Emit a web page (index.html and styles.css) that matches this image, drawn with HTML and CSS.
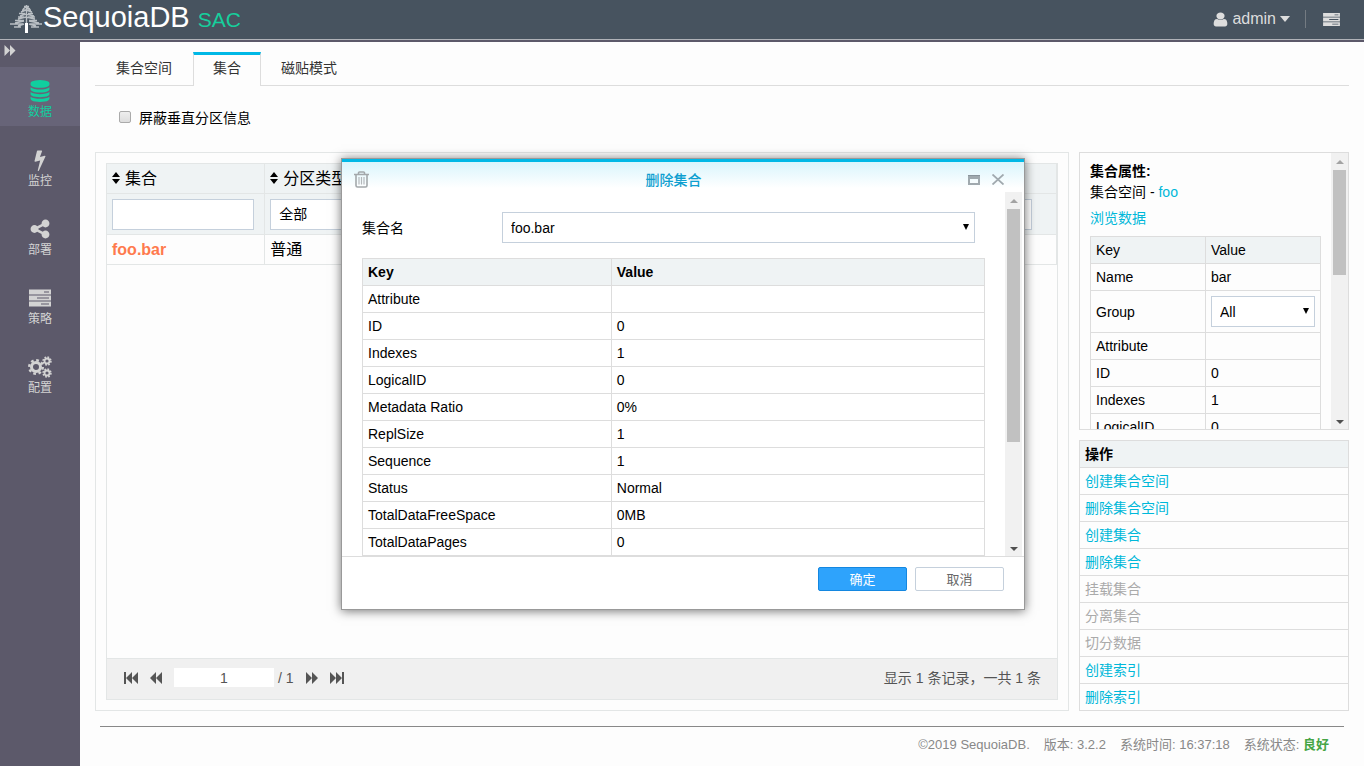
FILE: index.html
```
<!DOCTYPE html>
<html lang="zh-CN">
<head>
<meta charset="utf-8">
<title>SequoiaDB SAC</title>
<link rel="stylesheet" href="styles.css">
</head>
<body>
<svg class="defs" aria-hidden="true">
  <symbol id="i-tasks" viewBox="0 0 22 17"><path fill="currentColor" fill-rule="evenodd" d="M0 0h22v5H0zM15 2v1h5V2zM0 6h22v5H0zM8 8v1h12V8zM0 12h22v5H0zM12 14v1h8v-1z"/></symbol>
  <symbol id="i-fwd" viewBox="0 0 12 12"><path fill="currentColor" d="M0 0l6 6V0l6 6-6 6V6l-6 6z"/></symbol>
  <symbol id="i-end" viewBox="0 0 15 12"><path fill="currentColor" d="M0 0l6 6V0l6 6V0h2v12h-2V6l-6 6V6l-6 6z"/></symbol>
  <symbol id="i-sort" viewBox="0 0 8 12"><path fill="currentColor" d="M4 0l4 5H0zM4 12l4-5H0z"/></symbol>
  <symbol id="i-down" viewBox="0 0 8 8"><path fill="currentColor" d="M1 1h6L4 7z"/></symbol>
</svg>

<header class="topbar">
  <svg class="tree" viewBox="0 0 32 30" aria-hidden="true"><g stroke="#b9bfc4" fill="none"><path stroke-width="3" stroke="#fff" d="M16.500 19v10"/><path stroke-width="1.400" d="M16.500 1v18M14 2.500h5M12 6h9M13 5l3-2 4 2M9 9.500h6M18 9.500h5M11 8l5-2 6 2M8 13h6M18 13h7M10 12l6-2 8 2M5 16.500h9M19 16.500h8M8 15l8-2 9 2M0 20h13M20 20h12M5 19l9-2M19 17l10 2M4 23h7M21 23h8M8 22l6-2M19 20l7 2"/></g></svg>
  <span class="brand">SequoiaDB</span>
  <span class="sac">SAC</span>
  <div class="account">
    <button class="user" type="button">
      <svg width="15" height="15" viewBox="192 64 1408 1664" preserveAspectRatio="none" aria-hidden="true"><path fill="currentColor" d="M1536 1399q0 109-62.5 187t-150.5 78h-854q-88 0-150.5-78t-62.5-187q0-85 8.500-160.500t31.500-152 58.500-131 94-89 134.500-34.500q131 128 313 128t313-128q76 0 134.500 34.500t94 89 58.500 131 31.500 152 8.500 160.500zm-256-887q0 159-112.500 271.500t-271.500 112.500-271.500-112.500-112.500-271.500 112.500-271.500 271.500-112.500 271.500 112.500 112.500 271.500z"/></svg>
      <span>admin</span>
      <svg width="10" height="6" viewBox="0 0 10 6" aria-hidden="true"><path fill="currentColor" d="M0 0h10L5 6z"/></svg>
    </button>
    <button class="tasks" type="button" aria-label="Tasks"><svg width="17" height="13" aria-hidden="true"><use href="#i-tasks"/></svg></button>
  </div>
</header>

<div class="shell">
  <nav class="side">
    <button class="expand" type="button" aria-label="展开"><svg width="12" height="11"><use href="#i-fwd"/></svg></button>
    <a class="nav active" href="#"><svg width="22" height="22" viewBox="0 0 1792 1792"><path fill="currentColor" d="M896 768q237 0 443-43t325-127v170q0 69-103 128t-280 93.500-385 34.500-385-34.500-280-93.500-103-128v-170q119 84 325 127t443 43zm0 768q237 0 443-43t325-127v170q0 69-103 128t-280 93.500-385 34.500-385-34.500-280-93.500-103-128v-170q119 84 325 127t443 43zm0-384q237 0 443-43t325-127v170q0 69-103 128t-280 93.500-385 34.500-385-34.500-280-93.500-103-128v-170q119 84 325 127t443 43zm0-1152q208 0 385 34.500t280 93.500 103 128v128q0 69-103 128t-280 93.500-385 34.500-385-34.500-280-93.500-103-128v-128q0-69 103-128t280-93.500 385-34.500z"/></svg>数据</a>
    <a class="nav" href="#"><svg width="22" height="22" viewBox="0 0 1792 1792"><path fill="currentColor" d="M1333 566q18 20 7 44l-540 1157q-13 25-42 25-4 0-14-2-17-5-25.500-19t-4.500-30l197-808-406 101q-4 1-12 1-18 0-31-11-18-15-13-39l201-825q4-14 16-23t28-9h328q19 0 32 12.500t13 29.500q0 8-5 18l-171 463 396-98q8-2 12-2 19 0 34 15z"/></svg>监控</a>
    <a class="nav" href="#"><svg width="22" height="22" viewBox="0 0 1792 1792"><path fill="currentColor" d="M1344 1024q133 0 226.500 93.500t93.500 226.500-93.500 226.500-226.500 93.500-226.500-93.500-93.500-226.500q0-12 2-34l-360-180q-92 86-218 86-133 0-226.500-93.500t-93.500-226.500 93.500-226.500 226.500-93.500q126 0 218 86l360-180q-2-22-2-34 0-133 93.500-226.500t226.500-93.500 226.500 93.500 93.500 226.500-93.500 226.500-226.500 93.500q-126 0-218-86l-360 180q2 22 2 34t-2 34l360 180q92-86 218-86z"/></svg>部署</a>
    <a class="nav" href="#"><svg width="22" height="22"><use href="#i-tasks"/></svg>策略</a>
    <a class="nav" href="#"><svg width="24" height="22" viewBox="0 0 24 22"><g fill="none" stroke="currentColor"><circle cx="8" cy="11" r="4.500" stroke-width="3"/><circle cx="8" cy="11" r="6.800" stroke-width="2.400" stroke-dasharray="2.700 2.640"/><circle cx="19" cy="5" r="2.500" stroke-width="1.800"/><circle cx="19" cy="5" r="3.900" stroke-width="1.600" stroke-dasharray="1.700 1.363"/><circle cx="19" cy="17" r="2.500" stroke-width="1.800"/><circle cx="19" cy="17" r="3.900" stroke-width="1.600" stroke-dasharray="1.700 1.363"/></g></svg>配置</a>
  </nav>

  <main class="main">
    <div class="tabs">
      <a class="tab first" href="#">集合空间</a>
      <a class="tab current" href="#">集合</a>
      <a class="tab" href="#">磁贴模式</a>
    </div>
    <div class="option"><input type="checkbox" id="hide"><label for="hide">屏蔽垂直分区信息</label></div>

    <div class="columns">
      <section class="panel">
        <div class="grid">
          <table class="list">
            <thead>
              <tr><th><svg width="8" height="12"><use href="#i-sort"/></svg>集合</th><th><svg width="8" height="12"><use href="#i-sort"/></svg>分区类型</th><th></th><th></th><th></th><th></th></tr>
              <tr class="filters">
                <td><input type="text" aria-label="集合"></td>
                <td><select aria-label="分区类型"><option>全部</option></select></td>
                <td></td><td></td><td></td>
                <td class="last"><input type="text"></td>
              </tr>
            </thead>
            <tbody><tr><td><a class="name" href="#">foo.bar</a></td><td>普通</td><td></td><td></td><td></td><td></td></tr></tbody>
          </table>
          <div class="pager">
            <button type="button" class="flip" aria-label="首页"><svg width="15" height="12"><use href="#i-end"/></svg></button>
            <button type="button" class="flip" aria-label="上一页"><svg width="12" height="12"><use href="#i-fwd"/></svg></button>
            <input type="text" value="1" aria-label="页码">
            <span class="pages">/ 1</span>
            <button type="button" aria-label="下一页"><svg width="12" height="12"><use href="#i-fwd"/></svg></button>
            <button type="button" aria-label="末页"><svg width="15" height="12"><use href="#i-end"/></svg></button>
            <span class="total">显示 1 条记录，一共 1 条</span>
          </div>
        </div>
      </section>

      <aside class="aside">
        <section class="props">
          <div class="props-body">
            <h2>集合属性:</h2>
            <p>集合空间 - <a href="#">foo</a></p>
            <p class="browse"><a href="#">浏览数据</a></p>
            <table class="kv half">
              <thead><tr><td>Key</td><td>Value</td></tr></thead>
              <tbody>
                <tr><td>Name</td><td>bar</td></tr>
                <tr class="tall"><td>Group</td><td><span class="pick"><select aria-label="Group"><option>All</option></select><svg width="8" height="8"><use href="#i-down"/></svg></span></td></tr>
                <tr><td>Attribute</td><td></td></tr>
                <tr><td>ID</td><td>0</td></tr>
                <tr><td>Indexes</td><td>1</td></tr>
                <tr><td>LogicalID</td><td>0</td></tr>
              </tbody>
            </table>
          </div>
          <div class="bar" aria-hidden="true"><i class="up"></i><i class="thumb short"></i><i class="down"></i></div>
        </section>
        <section class="ops">
          <h2>操作</h2>
          <ul>
            <li><a href="#">创建集合空间</a></li>
            <li><a href="#">删除集合空间</a></li>
            <li><a href="#">创建集合</a></li>
            <li><a href="#">删除集合</a></li>
            <li class="off">挂载集合</li>
            <li class="off">分离集合</li>
            <li class="off">切分数据</li>
            <li><a href="#">创建索引</a></li>
            <li><a href="#">删除索引</a></li>
          </ul>
        </section>
      </aside>
    </div>

    <footer class="foot">
      <span>©2019 SequoiaDB.</span><span>版本: 3.2.2</span><span>系统时间: 16:37:18</span><span>系统状态: <b>良好</b></span>
    </footer>
  </main>
</div>

<div class="dialog" role="dialog" aria-labelledby="dlg-title">
  <div class="dlg-head">
    <svg width="15" height="17" viewBox="0 0 15 17" aria-hidden="true"><path fill="none" stroke="#a3a8ab" stroke-width="1.600" d="M0 3.500h15M4.500 3V1.800Q4.500 1 5.500 1h4q1 0 1 .8V3M2 4v10.500q0 1.500 1.500 1.500h8q1.500 0 1.500-1.500V4"/><path stroke="#b4b8bb" stroke-width="1.200" d="M5 6v7.500M7.500 6v7.500M10 6v7.500"/></svg>
    <h1 id="dlg-title">删除集合</h1>
    <button type="button" aria-label="最大化"><svg width="12" height="10" viewBox="0 0 12 10"><path fill="#a0a9ae" fill-rule="evenodd" d="M0 0h12v10H0zM2 4v4h8V4z"/><path fill="#89949b" d="M0 0h12v1H0z"/></svg></button>
    <button type="button" aria-label="关闭"><svg width="12" height="11" viewBox="0 0 12 11"><path stroke="#a0a9ae" stroke-width="1.800" d="M.5 .5l11 10M11.500 .5l-11 10"/></svg></button>
  </div>
  <div class="dlg-main">
    <div class="dlg-body">
      <div class="field">
        <label for="cl">集合名</label>
        <span class="pick"><select id="cl"><option>foo.bar</option></select><svg width="8" height="8"><use href="#i-down"/></svg></span>
      </div>
      <table class="kv wide">
        <thead><tr><th>Key</th><th>Value</th></tr></thead>
        <tbody>
          <tr><td>Attribute</td><td></td></tr>
          <tr><td>ID</td><td>0</td></tr>
          <tr><td>Indexes</td><td>1</td></tr>
          <tr><td>LogicalID</td><td>0</td></tr>
          <tr><td>Metadata Ratio</td><td>0%</td></tr>
          <tr><td>ReplSize</td><td>1</td></tr>
          <tr><td>Sequence</td><td>1</td></tr>
          <tr><td>Status</td><td>Normal</td></tr>
          <tr><td>TotalDataFreeSpace</td><td>0MB</td></tr>
          <tr><td>TotalDataPages</td><td>0</td></tr>
        </tbody>
      </table>
    </div>
    <div class="bar" aria-hidden="true"><i class="up"></i><i class="thumb"></i><i class="down"></i></div>
  </div>
  <div class="dlg-foot">
    <button class="btn primary" type="button">确定</button>
    <button class="btn" type="button">取消</button>
  </div>
</div>
</body>
</html>
```
FILE: styles.css
```
* { box-sizing: border-box; }
body {
  margin: 0;
  height: 100vh;
  display: flex;
  flex-direction: column;
  overflow: hidden;
  background: #fdfdfd;
  color: #000;
  font: 14px/20px "Liberation Sans", "Noto Sans CJK SC", sans-serif;
}
a { color: #00b8d9; text-decoration: none; }
h1, h2, p, ul { margin: 0; padding: 0; font-size: 14px; }
ul { list-style: none; }
svg { display: block; flex: none; }
button, input, select { font: inherit; color: inherit; }
button { padding: 0; border: 0; background: none; display: flex; align-items: center; }
input[type="text"], select {
  display: block;
  width: 100%;
  height: 31px;
  padding: 0 8px;
  border: 1px solid #c5d0dc;
  border-radius: 0;
  background: #fff;
  appearance: none;
}
.defs { position: absolute; width: 0; height: 0; }

.topbar {
  height: 42px;
  flex: none;
  display: flex;
  align-items: center;
  padding: 0 24px 4px 10px;
  background: #47535f;
  border-bottom: 2px solid #5c596a;
  box-shadow: inset 0 -1px #b0b2b8;
  color: #ddd;
}
.tree { width: 32px; height: 30px; margin-top: 2px; }
.brand { margin: 0 0 2px 1px; font-size: 29px; color: #fff; }
.sac { margin: 4px 0 0 8px; font-size: 21px; color: #16cf9c; }
.account { margin: 2px 0 0 auto; display: flex; align-items: center; }
.user { gap: 4px; font-size: 16px; }
.tasks { margin-left: 15px; height: 18px; padding-left: 17px; border-left: 1px solid #747b82; }

.shell { flex: 1; display: flex; min-height: 0; }
.side { width: 80px; flex: none; background: #5c596a; color: #d3d3d3; font-size: 12px; }
.expand { height: 25px; padding: 0 0 8px 4px; }
.nav {
  height: 59px;
  margin-bottom: 10px;
  padding-top: 13px;
  display: flex;
  flex-direction: column;
  align-items: center;
  line-height: 20px;
  color: #d3d3d3;
}
.nav.active { background: #676478; color: #10cf9f; }

.main { flex: 1; min-width: 0; display: flex; flex-direction: column; padding: 10px 15px 0; }
.tabs { display: flex; height: 34px; flex: none; border-bottom: 1px solid #ddd; }
.tab { height: 34px; padding: 3px 19px 0; line-height: 26px; border: solid transparent; border-width: 0 1px; color: #333; text-align: center; }
.tab.first { min-width: 98px; }
.tab.current { padding-top: 0; border-color: #ddd; border-top: 3px solid #00b8e6; background: #fdfdfd; }
.option { height: 66px; flex: none; display: flex; align-items: center; gap: 8px; padding: 0 0 2px 24px; }
.option input {
  appearance: none;
  width: 12px;
  height: 12px;
  margin: 0 0 2px;
  border: 1px solid #aaa;
  border-radius: 2px;
  background: linear-gradient(#eee, #ddd);
}

.columns { flex: 1; min-height: 0; display: flex; gap: 10px; }
.panel { flex: 1; min-width: 0; padding: 10px; border: 1px solid #e3e6e6; display: flex; }
.grid { flex: 1; display: flex; flex-direction: column; border: 1px solid #e3e6e6; }
.list { width: 100%; table-layout: fixed; border-collapse: separate; border-spacing: 0; font-size: 16px; }
.list th, .list td { height: 30px; padding: 0 5px; border: solid #e3e6e6; border-width: 0 1px 1px 0; text-align: left; font-weight: normal; }
.list thead { background: #eff3f4; }
.list th svg { display: inline-block; margin-right: 5px; }
.list .filters td { height: 41px; padding: 0 10px 0 5px; font-size: 14px; }
.list .filters .last { padding-right: 24px; }
.list .name { color: #ff7a4d; font-weight: bold; }
.pager { margin-top: auto; height: 41px; padding: 0 16px 3px; display: flex; align-items: center; background: #f0f0f0; border-top: 1px solid #e3e6e6; color: #555; }
.pager button { margin-right: 12px; }
.pager .flip { transform: scaleX(-1); }
.pager input[type="text"] { width: 100px; height: 19px; border: 0; text-align: center; }
.pager .pages { margin: 0 12px 0 4px; }
.total { margin-left: auto; }

.aside { width: 270px; flex: none; display: flex; flex-direction: column; gap: 10px; }
.props { flex: 1; min-height: 0; display: flex; border: 1px solid #ddd; }
.props-body { flex: 1; overflow: hidden; padding: 8px 10px 0; }
.props-body h2, .props-body p { line-height: 21px; }
.props-body .browse { margin: 5px 0 7px; }
.ops { border: 1px solid #ddd; border-bottom: 0; }
.ops h2, .ops li { height: 27px; padding: 0 5px; line-height: 26px; border-bottom: 1px solid #ddd; }
.ops h2 { background: #eff3f4; }
.ops .off { color: #aaa; }

.kv { width: 100%; table-layout: fixed; border-collapse: collapse; }
.kv th, .kv td { height: 27px; padding: 0 5px; border: 1px solid #ddd; text-align: left; }
.kv thead { background: #eff3f4; }
.kv .tall td { height: 42px; }
.wide th:first-child { width: 40%; }
.pick { position: relative; display: block; }
.pick svg { position: absolute; right: 5px; top: 11px; }

.bar { width: 17px; flex: none; display: flex; flex-direction: column; align-items: center; background: #f1f1f1; margin-right: 2px; }
.props .bar { margin: 0; }
.bar .up, .bar .down { border: 4px solid transparent; }
.bar .up { margin: 3px 0 6px; border-bottom-color: #a3a3a3; }
.bar .down { margin: auto 0 1px; border-top-color: #505050; }
.thumb { width: 13px; height: 64%; background: #c1c1c1; }
.thumb.short { height: 38%; }

.foot {
  flex: none;
  height: 40px;
  margin: 15px 5px 0;
  padding: 8px 15px 0;
  display: flex;
  justify-content: flex-end;
  gap: 14px;
  border-top: 1px solid #888;
  color: #888;
  font-size: 13px;
}
.foot b { color: #46a546; font-size: 13px; }

.dialog {
  position: absolute;
  left: 50%;
  top: 158px;
  width: 684px;
  margin-left: -341px;
  border: 1px solid #999;
  background: #fff;
  box-shadow: 0 1px 10px rgba(0, 0, 0, .55);
}
.dlg-head {
  height: 33px;
  padding: 5px 20px 0 12px;
  display: flex;
  align-items: center;
  gap: 12px;
  border-top: 3px solid #00b8e6;
  background: linear-gradient(#d9f5fc, #fff 26px);
}
.dlg-head h1 { flex: 1; padding-left: 10px; text-align: center; color: #0e9fd0; font-weight: 500; }
.dlg-main { display: flex; height: 365px; border-bottom: 1px solid #ddd; }
.dlg-body { flex: 1; overflow: hidden; padding: 20px 20px 0; }
.field { display: flex; align-items: center; margin-bottom: 15px; }
.field label { width: 140px; }
.field .pick { flex: 1; margin-right: 10px; }
.dlg-foot { display: flex; justify-content: flex-end; gap: 8px; padding: 10px 20px 18px; }
.btn { width: 89px; height: 24px; padding-top: 1px; justify-content: center; border: 1px solid #c5d0dc; border-radius: 2px; background: #fff; color: #666; font-size: 13px; }
.btn.primary { background: #2ea3fc; border-color: #1487e0; color: #fff; }
```
